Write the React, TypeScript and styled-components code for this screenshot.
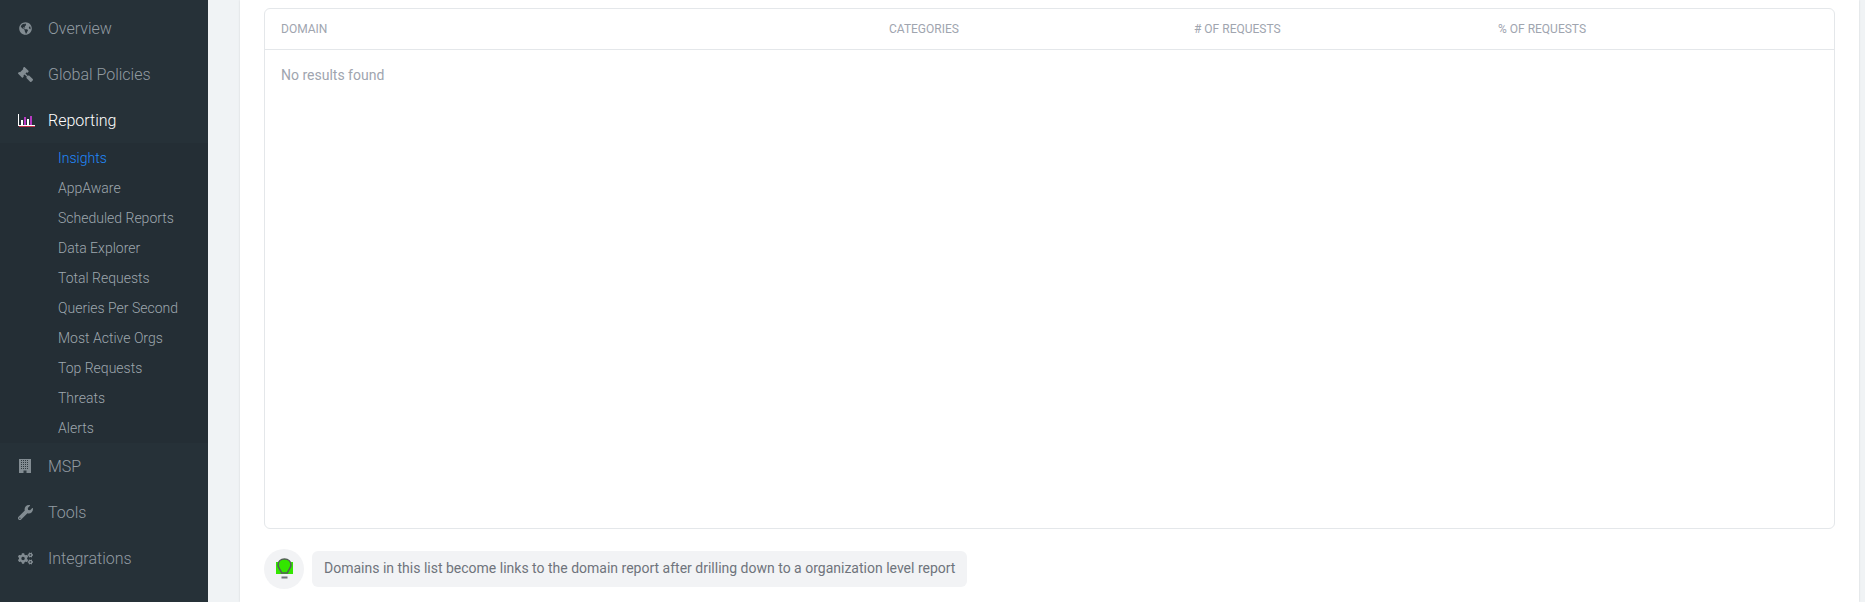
import React from "react";
import styled, { createGlobalStyle } from "styled-components";
import { FaGlobeAmericas, FaGavel, FaWrench, FaCogs } from "react-icons/fa";

const Global = createGlobalStyle`
  html, body { margin: 0; padding: 0; height: 602px; overflow: hidden; background: #f0f3f5; }
  body { font-family: Roboto, "Liberation Sans", sans-serif; }
`;

const Page = styled.div`
  display: flex;
  width: 1865px;
  height: 602px;
  overflow: hidden;
`;

const Sidebar = styled.nav`
  flex: 0 0 208px;
  background: #263138;
  padding-top: 5px;
`;

const NavItem = styled.div<{ $active?: boolean }>`
  display: flex;
  align-items: center;
  height: 46px;
  padding-left: 18px;
  font-size: 16px;
  font-weight: 300;
  color: ${(p) => (p.$active ? "#ffffff" : "#929ba2")};
`;

const NavIcon = styled.span<{ $flip?: boolean; $size?: number; $inset?: number }>`
  display: flex;
  align-items: center;
  box-sizing: border-box;
  width: 30px;
  padding-left: ${(p) => p.$inset ?? 0}px;
  font-size: ${(p) => p.$size ?? 15}px;
  color: #828c92;
  svg {
    flex: none;
    transform: ${(p) => (p.$flip ? "scaleX(-1)" : "none")};
  }
`;

const SubMenu = styled.div`
  background: #242e35;
`;

const SubItem = styled.div<{ $active?: boolean }>`
  height: 30px;
  line-height: 30px;
  padding-left: 58px;
  font-size: 14px;
  font-weight: 300;
  color: ${(p) => (p.$active ? "#2188fa" : "#9ea7ae")};
`;

const Main = styled.main`
  flex: 1;
  display: flex;
  padding: 0 6px 0 32px;
  background: #f0f3f5;
`;

const Panel = styled.section`
  flex: 1;
  background: #ffffff;
  padding: 8px 24px 0;
  box-shadow: 0 0 2px rgba(0, 0, 0, 0.12);
`;

const Card = styled.div`
  height: 521px;
  box-sizing: border-box;
  border: 1px solid #e4e7ea;
  border-radius: 6px;
`;

const HeadRow = styled.div`
  display: grid;
  grid-template-columns: 608px 305px 304px 1fr;
  height: 40px;
  align-items: center;
  padding-left: 16px;
  border-bottom: 1px solid #e4e7ea;
`;

const HeadCell = styled.div`
  font-size: 12px;
  font-weight: 400;
  color: #a0a5af;
  text-transform: uppercase;
`;

const Empty = styled.div`
  padding: 16px;
  font-size: 14px;
  line-height: 18px;
  color: #a0a5af;
`;

const Hint = styled.div`
  display: flex;
  align-items: center;
  gap: 8px;
  margin-top: 20px;
`;

const BulbCircle = styled.div`
  display: flex;
  align-items: center;
  justify-content: center;
  width: 40px;
  height: 40px;
  border-radius: 50%;
  background: #f2f3f5;
`;

const Bubble = styled.div`
  height: 36px;
  line-height: 35px;
  padding: 0 12px;
  border-radius: 6px;
  background: #f2f3f5;
  font-size: 14px;
  color: #6f747c;
`;

const Bulb = () => (
  <svg width="17" height="22" viewBox="0 0 17 22" aria-hidden>
    <rect x="0" y="4" width="17" height="12" fill="#33e600" />
    <path
      d="M8.5 1C4.6 1 2 3.6 2 7c0 3 2.6 4.4 3.6 8h5.8c1-3.6 3.6-5 3.6-8C15 3.6 12.4 1 8.5 1Z"
      fill="#33e600"
      stroke="#555e58"
      strokeWidth="1.6"
    />
    <rect x="5.5" y="18.5" width="6" height="2" fill="#71757b" />
  </svg>
);

const ChartIcon = () => (
  <svg width="17" height="13" viewBox="0 0 17 13" aria-hidden>
    <rect x="0" y="0" width="1" height="12" fill="#fff" />
    <rect x="0" y="11" width="17" height="1" fill="#fff" />
    <rect x="1" y="12" width="16" height="1" fill="#c0304a" />
    <rect x="3" y="6" width="2" height="5" fill="#fff" />
    <rect x="6" y="3" width="2" height="8" fill="#b63ac2" />
    <rect x="9" y="5" width="2" height="6" fill="#fff" />
    <rect x="12" y="2" width="2" height="9" fill="#b63ac2" />
  </svg>
);

const BuildingIcon = () => (
  <svg width="12" height="14" viewBox="0 0 12 14" aria-hidden>
    <rect width="12" height="14" fill="#828c92" />
    {[1, 3, 5, 7, 9].map((y) =>
      [2, 4, 6, 8].map((x) => (
        <rect key={`${x}-${y}`} x={x} y={y} width="1" height="1" fill="#2f3a41" />
      ))
    )}
    <rect x="4.5" y="11.5" width="3" height="2.5" fill="#2f3a41" />
  </svg>
);

const subs = [
  "Insights",
  "AppAware",
  "Scheduled Reports",
  "Data Explorer",
  "Total Requests",
  "Queries Per Second",
  "Most Active Orgs",
  "Top Requests",
  "Threats",
  "Alerts",
];

export default function App() {
  return (
    <>
      <Global />
      <Page>
        <Sidebar>
          <NavItem>
            <NavIcon $size={13} $inset={1}><FaGlobeAmericas /></NavIcon>Overview
          </NavItem>
          <NavItem>
            <NavIcon $flip><FaGavel /></NavIcon>Global Policies
          </NavItem>
          <NavItem $active>
            <NavIcon><ChartIcon /></NavIcon>Reporting
          </NavItem>
          <SubMenu>
            {subs.map((s, i) => (
              <SubItem key={s} $active={i === 0}>{s}</SubItem>
            ))}
          </SubMenu>
          <NavItem>
            <NavIcon $inset={1}><BuildingIcon /></NavIcon>MSP
          </NavItem>
          <NavItem>
            <NavIcon><FaWrench /></NavIcon>Tools
          </NavItem>
          <NavItem>
            <NavIcon><FaCogs /></NavIcon>Integrations
          </NavItem>
        </Sidebar>
        <Main>
          <Panel>
            <Card>
              <HeadRow>
                <HeadCell>Domain</HeadCell>
                <HeadCell>Categories</HeadCell>
                <HeadCell># of Requests</HeadCell>
                <HeadCell>% of Requests</HeadCell>
              </HeadRow>
              <Empty>No results found</Empty>
            </Card>
            <Hint>
              <BulbCircle><Bulb /></BulbCircle>
              <Bubble>Domains in this list become links to the domain report after drilling down to a organization level report</Bubble>
            </Hint>
          </Panel>
        </Main>
      </Page>
    </>
  );
}
